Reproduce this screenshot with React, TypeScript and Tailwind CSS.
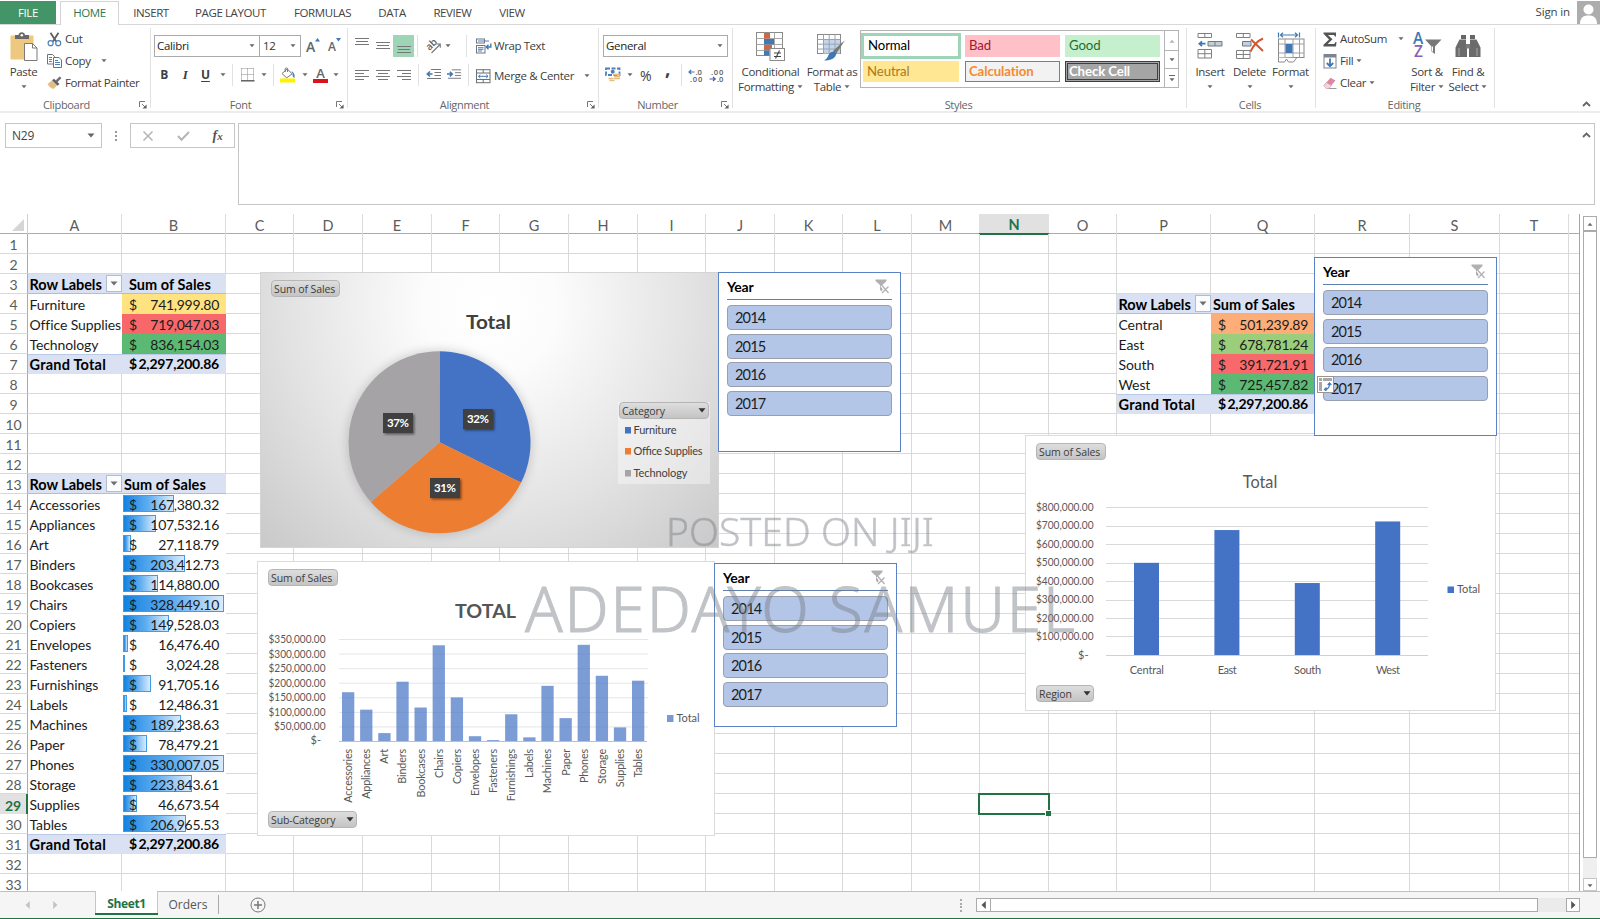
import React from "react";

/* ---------- small shared pieces ---------- */

function Caret({ className = "" }: { className?: string }) {
  return (
    <svg width="6" height="4" viewBox="0 0 6 4" className={`shrink-0 ${className}`}>
      <path d="M0.5 0.3h5L3 3.3z" fill="#6a6a6a" />
    </svg>
  );
}

function Launcher() {
  return (
    <svg width="8" height="8" viewBox="0 0 8 8" className="shrink-0">
      <path d="M0.5 6V0.5H6M3 3l3 3" stroke="#777" fill="none" />
      <path d="M7.6 3.4v4.2H3.4z" fill="#666" />
    </svg>
  );
}

function Group({ label, className, launcher, labelShift = "", children }: { label: string; className: string; launcher?: boolean; labelShift?: string; children: React.ReactNode }) {
  return (
    <section className={`flex h-[87px] shrink-0 flex-col ${className}`}>
      <div className="h-[72px] w-full">{children}</div>
      <div className={`flex h-[15px] items-center ${launcher ? "pr-[3px]" : ""}`}>
        <span className={`flex-1 text-center text-[11px] leading-[14px] text-[#666] ${labelShift}`}>{label}</span>
        {launcher && <Launcher />}
      </div>
    </section>
  );
}

function GroupLine() {
  return <div className="mt-[3px] h-[80px] w-px shrink-0 bg-[#e2e2e2]" />;
}

function Rule() {
  return <div className="h-[22px] w-px shrink-0 bg-[#e1e1e1]" />;
}

function Slot({ className, children }: { className: string; children?: React.ReactNode }) {
  return <div className={`flex shrink-0 items-center ${className}`}>{children}</div>;
}

/* ---------- ribbon icons ---------- */

const PasteIcon = () => (
  <svg width="28" height="30" viewBox="0 0 28 30">
    <rect x="0.5" y="3.5" width="23" height="24" rx="1" fill="#edc87e" />
    <path d="M5 3h3.5a3.3 3.3 0 0 1 6.5 0H19v4H5z" fill="#6b6668" />
    <circle cx="11.8" cy="3.2" r="1.3" fill="#fff" />
    <path d="M14.5 11.5h8l4.500 4.500v12.500h-12.500z" fill="#fff" stroke="#7a7a7a" />
    <path d="M22.500 11.500v4.500h4.500" fill="none" stroke="#7a7a7a" />
  </svg>
);
const CutIcon = () => (
  <svg width="15" height="15" viewBox="0 0 15 15">
    <path d="M3.500 0.800l5.600 8.700M11.500 0.800L5.900 9.500" stroke="#606060" strokeWidth="1.800" />
    <circle cx="3.600" cy="11.200" r="2.500" fill="none" stroke="#4d7fb8" strokeWidth="1.200" />
    <circle cx="11.200" cy="11.200" r="2.500" fill="none" stroke="#4d7fb8" strokeWidth="1.200" />
  </svg>
);
const CopyIcon = () => (
  <svg width="16" height="14" viewBox="0 0 16 14">
    <path d="M0.500 0.500h5l2 2v7.500h-7z" fill="#fff" stroke="#727272" />
    <path d="M2 3.500h3M2 5.500h3M2 7.500h3" stroke="#4d7fb8" />
    <path d="M6.500 3.500h5.500l2.500 2.500v7.500h-8z" fill="#fff" stroke="#727272" />
    <path d="M8 6.500h3M8 8.500h5M8 10.500h5" stroke="#4d7fb8" />
  </svg>
);
const PainterIcon = () => (
  <svg width="15" height="14" viewBox="0 0 15 14">
    <path d="M0.500 8L5 4.500l5 5L6.500 13c-1.500-.5-4.500-2-6-5z" fill="#e6bd80" />
    <path d="M5 4.300l2-1.600 5.500 5.200-2 1.800z" fill="#606060" />
    <path d="M8.300 4.800L12.600 0.400l1.900 1.700-4.300 4.500z" fill="#707070" />
  </svg>
);
const BordersIcon = () => (
  <svg width="14" height="14" viewBox="0 0 14 14">
    <path d="M0.500 0.500h12.500M0.500 6.500h12.500M0.500 0.500v12M6.500 0.500v12M12.500 0.500v12" stroke="#8a8a8a" strokeDasharray="1 1" />
    <path d="M0 12.800h13.500" stroke="#555" strokeWidth="1.400" />
  </svg>
);
const BucketIcon = () => (
  <svg width="16" height="16" viewBox="0 0 16 16">
    <path d="M2 6.500L7.200 2l5 4.800-5.500 4.100z" fill="#fff" stroke="#777" />
    <path d="M5.200 5V1.500q1.200-1.300 2.400 0V5" fill="none" stroke="#777" />
    <path d="M11.300 4.200q3.800 1 3.300 6.600q-2.400 0-2-4.600z" fill="#4d7fb8" />
    <rect x="0" y="11.500" width="15" height="4" fill="#fff200" />
  </svg>
);
const LinesIcon = ({ rows }: { rows: [number, number, number][] }) => (
  <svg width="14" height="14" viewBox="0 0 14 14">
    {rows.map(([x, y, w]) => (
      <rect key={y} x={x} y={y} width={w} height="1" fill="#777" />
    ))}
  </svg>
);
const OrientIcon = () => (
  <svg width="17" height="15" viewBox="0 0 17 15" className="overflow-visible">
    <text x="0" y="0" transform="translate(4.500 12) rotate(-45)" fontSize="10" fontFamily="Open Sans" fontWeight="600" fill="#606060">ab</text>
    <path d="M6.500 14L15 5.500M11.500 5h3.800v3.800" stroke="#777" fill="none" strokeWidth="1.100" />
  </svg>
);
const IndentIcon = ({ flip }: { flip?: boolean }) => (
  <svg width="16" height="12" viewBox="0 0 16 12">
    <path d="M5 0.500h10M8.500 3.500h6.500M8.500 6.500h6.500M1 9.500h14" stroke="#777" />
    {flip ? <path d="M0 5h5M3 2.500L5.700 5 3 7.500" stroke="#3f78b5" strokeWidth="1.600" fill="none" /> : <path d="M1.500 5h5M4 2.500L1.300 5 4 7.500" stroke="#3f78b5" strokeWidth="1.600" fill="none" />}
  </svg>
);
const WrapIcon = () => (
  <svg width="16" height="16" viewBox="0 0 16 16">
    <rect x="0.500" y="1" width="8" height="4" fill="#fff" stroke="#6f7680" />
    <path d="M2 3h11" stroke="#4d7fb8" />
    <rect x="0.500" y="7.500" width="8.500" height="7.500" fill="#fff" stroke="#6f7680" />
    <path d="M2 9.700h5.500M2 11.300h5.500M2 13h4" stroke="#4d7fb8" />
    <path d="M14.800 5.500v3.500h-4M12.500 6.700L10.300 9l2.200 2.200" stroke="#3f78b5" strokeWidth="1.400" fill="none" />
  </svg>
);
const MergeIcon = () => (
  <svg width="15" height="15" viewBox="0 0 15 15">
    <rect x="0.500" y="0.700" width="13.500" height="13" fill="#fff" stroke="#6f6f6f" />
    <path d="M0.500 4h13.500M0.500 10.500h13.500M7.200 0.700V4M7.200 10.500v3.200" stroke="#6f6f6f" />
    <path d="M2.500 7.300h9.500M4.300 5.600L2.500 7.300l1.800 1.700M10.200 5.600L12 7.300 10.200 9" stroke="#3f78b5" fill="none" />
  </svg>
);
const CurrencyIcon = () => (
  <svg width="16" height="16" viewBox="0 0 16 16">
    <rect x="1" y="1.500" width="13.500" height="6.500" fill="#fff" stroke="#4d7fb8" strokeWidth="1.800" strokeDasharray="4 1.500" />
    <circle cx="7.700" cy="4.700" r="2" fill="#4d7fb8" />
    <path d="M8 7.500h7M9 9.500h6M3.500 11.500h5M4.500 13.500h5M9 11.500h6" stroke="#e6bd80" strokeWidth="1.300" />
  </svg>
);
const DecimalIcon = ({ less }: { less?: boolean }) => (
  <svg width="15" height="15" viewBox="0 0 15 15" fontFamily="Open Sans" fontSize="7.600" fontWeight="600" fill="#606060" className="overflow-visible">
    {less ? (
      <>
        <text x="2" y="6.500" textLength="12">.00</text>
        <text x="8" y="13.500" textLength="6">.0</text>
        <path d="M0.500 11h5.500M4 9l2.200 2L4 13" stroke="#4a5fa8" fill="none" strokeWidth="1.200" />
      </>
    ) : (
      <>
        <text x="7.500" y="6.500" textLength="6">.0</text>
        <text x="2" y="13.500" textLength="12">.00</text>
        <path d="M1 4h5.500M3.200 2L1 4l2.200 2" stroke="#3f78b5" fill="none" strokeWidth="1.200" />
      </>
    )}
  </svg>
);
const CondIcon = () => (
  <svg width="30" height="30" viewBox="0 0 30 30">
    <rect x="0.500" y="0.500" width="26" height="23" fill="#fff" stroke="#8a8a8a" />
    <path d="M0.500 6.500h26M0.500 12.500h26M0.500 18.500h26M8.500 0.500v23M13.500 0.500v23M18.500 0.500v23" stroke="#a8a8a8" />
    <rect x="8" y="1" width="6" height="5.500" fill="#d2663e" />
    <rect x="8" y="7" width="10" height="5.500" fill="#4379b0" />
    <rect x="8" y="13" width="8" height="5" fill="#d2663e" />
    <rect x="8" y="18.500" width="5" height="5" fill="#4379b0" />
    <rect x="14" y="16.500" width="14.500" height="12" fill="#fff" stroke="#8a8a8a" />
    <path d="M18 21h7M18 24.500h7M23.500 18.500l-4 8" stroke="#444" strokeWidth="1.100" />
  </svg>
);
const TableIcon = () => (
  <svg width="30" height="30" viewBox="0 0 30 30">
    <rect x="0.500" y="2.500" width="23" height="19" fill="#fff" stroke="#8a8a8a" />
    <rect x="6" y="7.500" width="17" height="14" fill="#c2d5ea" />
    <path d="M0.500 7.500h23M0.500 12.200h23M0.500 17h23M6.500 2.500v19M12.200 2.500v19M18 2.500v19" stroke="#9aa4b0" />
    <path d="M27.800 8.500l-8.500 13-3.500-2.300L24.500 11z" fill="#787878" />
    <path d="M19.500 21.500c-1 4.500-5 7-12.500 7 3-1.500 3.500-3.500 4.500-5.500 1.500-3 6-4.500 8-1.500z" fill="#3f78b5" />
  </svg>
);
const InsertIcon = () => (
  <svg width="26" height="28" viewBox="0 0 26 28">
    <path d="M1 1.500h13.500v4H1zM7.800 1.500v4M1 17.500h13.500v8.500H1zM7.800 17.500v8.500M1 21.700h13.500" stroke="#808080" fill="#fff" />
    <path d="M11 9.500h14v4.500H11zM18 9.500V14" stroke="#707a85" fill="#c6ccd4" />
    <path d="M2 11.700h6.500M5 9.300l-2.700 2.400L5 14.200" stroke="#3f78b5" fill="none" strokeWidth="1.700" />
  </svg>
);
const DeleteIcon = () => (
  <svg width="28" height="28" viewBox="0 0 28 28">
    <path d="M0.500 1.500H14v4H0.500zM7.300 1.500v4M0.500 18.500H14v8H0.500zM7.300 18.500v8M0.500 22.500H14" stroke="#808080" fill="#fff" />
    <path d="M6.500 9.500H15v4.500H6.500z" stroke="#707a85" fill="#c2d0e0" />
    <path d="M15 7.500l12 11.500M27 6.500Q19 10 14.500 19.500" stroke="#d2562f" fill="none" strokeWidth="2" />
  </svg>
);
const FormatIcon = () => (
  <svg width="28" height="31" viewBox="0 0 28 31">
    <path d="M1.500 0.500v5M22.500 0.500v5M3 3h18M6 0.800L3.500 3 6 5.200M18 0.800L20.500 3 18 5.200" stroke="#3f78b5" fill="none" strokeWidth="1.200" />
    <rect x="1.500" y="7" width="25.500" height="18.500" fill="#fff" stroke="#8a8a8a" />
    <path d="M1.500 12h25.500M1.500 21h25.500M8 7v18.500M16 7v18.500M22.500 7v18.500" stroke="#a0a0a0" />
    <rect x="8.500" y="12" width="7" height="9" fill="#3f78b5" />
    <path d="M1.500 25.500v4.500h6l2-3 2 3h5l3-4" stroke="#8a8a8a" fill="#fff" />
  </svg>
);
const SigmaIcon = () => (
  <svg width="14" height="15" viewBox="0 0 14 15">
    <path d="M0.500 0.500h12.500V4.500h-1L11 2.900H5L9.500 7.200 4.700 12H11.300l1.200-1.900h1L13 14.500H0.500v-1.700L6 7.400 0.500 1.800z" fill="#555" />
  </svg>
);
const FillIcon = () => (
  <svg width="14" height="15" viewBox="0 0 14 15">
    <rect x="1" y="0.500" width="12" height="13.500" fill="#fff" stroke="#7a8590" />
    <rect x="1" y="0.500" width="12" height="3" fill="#7a8590" />
    <path d="M7 4.500v7.500M3.800 9L7 12.200 10.200 9" stroke="#3f78b5" fill="none" strokeWidth="1.800" />
  </svg>
);
const EraserIcon = () => (
  <svg width="14" height="13" viewBox="0 0 14 13">
    <path d="M0.800 8.500L7.500 0.800 12.500 3.500 6 11z" fill="#dd87a0" />
    <path d="M0.800 8.500l2.700-3 5 3L6 11.500H3z" fill="#f4d4dd" stroke="#c999a8" strokeWidth=".6" />
    <path d="M6 11.500h7.500" stroke="#9a9a9a" />
  </svg>
);
const SortIcon = () => (
  <svg width="29" height="27" viewBox="0 0 29 27" fontFamily="Open Sans" fontWeight="600" fontSize="15.500" className="overflow-visible">
    <text x="0" y="11.800" fill="#3f78b5">A</text>
    <text x="1" y="25.300" fill="#8560b8">Z</text>
    <path d="M12 7.500h16.500L22 14.500v7.500l-3.500-2.500v-5z" fill="#787878" />
    <path d="M19.500 14.500v5" stroke="#fff" />
  </svg>
);
const FindIcon = () => (
  <svg width="26" height="24" viewBox="0 0 26 24">
    <path d="M6 1h5v4h-5zM15 1h5v4h-5z" fill="#666" />
    <path d="M4.500 5.500H11V10l1 2v11H0.500V13.500zM15 5.500h6.500l4 8V23H14V12l1-2z" fill="#6b6b6b" />
    <path d="M11 10h4v4.500h-4z" fill="#7d7d7d" />
    <path d="M4 14v8M22 14v8" stroke="#aaa" />
  </svg>
);

function BigButton({ icon, lines, className, bottomCaret }: { icon: React.ReactNode; lines: string[]; className: string; bottomCaret?: boolean }) {
  return (
    <div className={`flex shrink-0 flex-col items-center ${className}`}>
      <div className="flex h-[32px] items-start">{icon}</div>
      <span className="h-[15px] text-[11.5px] leading-[15px] whitespace-nowrap">{lines[0]}</span>
      {lines[1] && (
        <span className="flex h-[15px] items-center gap-[3px] text-[11.5px] leading-[15px] whitespace-nowrap">
          {lines[1]}
          <Caret />
        </span>
      )}
      {bottomCaret && <Caret className="mt-[6px]" />}
    </div>
  );
}

function Ribbon() {
  return (
    <div className="flex h-[88px] border-b-2 border-[#ececec] bg-white text-[11.5px] tracking-[-0.32px] text-[#404040]">
      <Group label="Clipboard" className="w-[150px]" launcher labelShift="pl-[2px] pr-[8px]">
        <div className="flex pt-[7px]">
          <BigButton className="ml-[6px] w-[35px]" icon={<PasteIcon />} lines={["Paste"]} bottomCaret />
          <div className="-mt-px ml-[6px] flex flex-col">
            <Slot className="h-[16px] gap-[2px]"><Slot className="w-[16px]"><CutIcon /></Slot>Cut</Slot>
            <Slot className="mt-[6px] h-[16px] gap-[2px]"><Slot className="w-[16px]"><CopyIcon /></Slot>Copy<Caret className="ml-[8px]" /></Slot>
            <Slot className="mt-[6px] h-[16px] gap-[2px]"><Slot className="w-[16px]"><PainterIcon /></Slot><span className="tracking-[-0.42px]">Format Painter</span></Slot>
          </div>
        </div>
      </Group>
      <GroupLine />
      <Group label="Font" className="w-[196px]" launcher labelShift="pr-[6px]">
        <div className="flex h-[32px] items-end pl-[3px]">
          <div className="flex h-[22px] w-[106px] items-center justify-between border border-[#ababab] pr-[4px] pl-[2px] text-[#222]">Calibri<Caret /></div>
          <div className="-ml-px flex h-[22px] w-[42px] items-center justify-between border border-[#ababab] pr-[4px] pl-[3px] text-[#333]">12<Caret /></div>
          <div className="ml-[5px] flex h-[22px] items-center text-[14px] font-semibold text-[#666]">A<svg width="5" height="4" viewBox="0 0 5 4" className="-mt-[12px]"><path d="M0 3.500h5L2.500 0z" fill="#3f78b5" /></svg></div>
          <div className="ml-[8px] flex h-[22px] items-center pt-[2px] text-[12px] font-semibold text-[#666]">A<svg width="5" height="4" viewBox="0 0 5 4" className="-mt-[14px]"><path d="M0 0h5L2.500 3.500z" fill="#3f78b5" /></svg></div>
        </div>
        <div className="mt-[7px] flex h-[22px] items-center">
          <Slot className="w-[24px] justify-center pl-[2px] text-[12px] font-bold">B</Slot>
          <Slot className="w-[20px] justify-center font-['Liberation_Serif'] text-[13px] font-bold italic">I</Slot>
          <Slot className="w-[21px] justify-center text-[12px] font-bold underline underline-offset-2">U</Slot>
          <Slot className="w-[16px] pl-[4px]"><Caret /></Slot>
          <Rule />
          <Slot className="w-[24px] pl-[8px]"><BordersIcon /></Slot>
          <Slot className="w-[16px] pl-[4px]"><Caret /></Slot>
          <Rule />
          <Slot className="w-[22px] pl-[6px]"><BucketIcon /></Slot>
          <Slot className="w-[17px] pl-[6px]"><Caret /></Slot>
          <div className="flex w-[15px] flex-col items-center">
            <span className="h-[12px] text-[13px] leading-[13px] font-semibold text-[#666]">A</span>
            <span className="h-[4px] w-[15px] bg-[#d8141c]" />
          </div>
          <Slot className="pl-[5px]"><Caret /></Slot>
        </div>
      </Group>
      <GroupLine />
      <Group label="Alignment" className="w-[250px]" launcher labelShift="pr-[6px]">
        <div className="flex">
          <div className="flex w-[121px] shrink-0 flex-col">
            <div className="flex h-[32px] items-end">
              <Slot className="h-[22px] w-[21px] pb-[4px] pl-[7px]"><LinesIcon rows={[[0, 1, 14], [1, 4, 12], [0, 7, 14]]} /></Slot>
              <Slot className="h-[22px] w-[24px] pb-[1px] pl-[7px]"><LinesIcon rows={[[0, 3, 14], [1, 6, 12], [0, 9, 14]]} /></Slot>
              <Slot className="h-[22px] w-[21px] justify-center bg-[#9ed5b7]"><LinesIcon rows={[[0, 7, 14], [1, 10, 12], [0, 13, 14]]} /></Slot>
              <Slot className="h-[22px] w-[4px] justify-end"><Rule /></Slot>
              <Slot className="h-[22px] w-[25px] pl-[7px]"><OrientIcon /></Slot>
              <Slot className="h-[22px] pl-[2px]"><Caret /></Slot>
              <Slot className="ml-[15px] h-[22px]"><Rule /></Slot>
            </div>
            <div className="mt-[7px] flex h-[22px] items-center">
              <Slot className="w-[21px] pl-[7px]"><LinesIcon rows={[[0, 2, 14], [0, 5, 9], [0, 8, 14], [0, 11, 9]]} /></Slot>
              <Slot className="w-[21px] pl-[7px]"><LinesIcon rows={[[0, 2, 14], [2, 5, 10], [0, 8, 14], [2, 11, 10]]} /></Slot>
              <Slot className="w-[28px] pl-[7px]"><LinesIcon rows={[[0, 2, 14], [5, 5, 9], [0, 8, 14], [5, 11, 9]]} /></Slot>
              <Rule />
              <Slot className="w-[28px] pl-[7px]"><IndentIcon /></Slot>
              <IndentIcon flip />
              <Slot className="ml-[6px]"><Rule /></Slot>
            </div>
          </div>
          <div className="flex flex-col pl-[7px]">
            <Slot className="mt-[10px] h-[22px] gap-[2px] tracking-[-0.42px]"><WrapIcon />Wrap Text</Slot>
            <Slot className="mt-[8px] h-[22px] gap-[2px]"><Slot className="w-[16px]"><MergeIcon /></Slot>Merge &amp; Center<Caret className="ml-[8px]" /></Slot>
          </div>
        </div>
      </Group>
      <GroupLine />
      <Group label="Number" className="w-[133px]" launcher labelShift="pr-[5px]">
        <div className="flex h-[32px] items-end pl-[4px]">
          <div className="flex h-[22px] w-[125px] items-center justify-between border border-[#ababab] pr-[4px] pl-[2px] text-[#222]">General<Caret /></div>
        </div>
        <div className="mt-[7px] flex h-[22px] items-center">
          <Slot className="w-[28px] pl-[6px]"><CurrencyIcon /></Slot>
          <Slot className="w-[13px]"><Caret /></Slot>
          <Slot className="w-[16px] text-[14px]">%</Slot>
          <Slot className="w-[25px] pb-[14px] pl-[9px] text-[19px] leading-[16px] font-bold">,</Slot>
          <Rule />
          <Slot className="w-[21px] pl-[6px]"><DecimalIcon /></Slot>
          <Slot className="pl-[6px]"><DecimalIcon less /></Slot>
        </div>
      </Group>
      <GroupLine />
      <Group label="Styles" className="w-[453px]" labelShift="pr-[2px]">
        <div className="flex h-[72px]">
          <BigButton className="mt-[7px] w-[75px]" icon={<CondIcon />} lines={["Conditional", "Formatting"]} />
          <BigButton className="mt-[7px] w-[48px]" icon={<TableIcon />} lines={["Format as", "Table"]} />
          <div className="mt-[5px] ml-[4px] flex h-[58px] w-[319px] border border-[#b4b4b4] pt-[2px] pl-px font-['Lato'] text-[13.200px] tracking-[-0.1px]">
            <div className="grid flex-1 grid-cols-[98px_95px_95px] grid-rows-[26px_22px] gap-x-[5px]">
              <div className="-ml-px flex w-[100px] items-center border-[3px] border-[#9ed5b7] bg-white pl-[4px] text-black">Normal</div>
              <div className="my-[2px] flex items-center bg-[#ffc0c8] pl-[4px] text-[#a8142c]">Bad</div>
              <div className="my-[2px] flex items-center bg-[#c6efce] pl-[4px] text-[#1d7030]">Good</div>
              <div className="mt-[2px] ml-px flex h-[21px] w-[96px] items-center bg-[#ffe794] pt-px pl-[4px] text-[#a87a20]">Neutral</div>
              <div className="mt-[2px] flex h-[21px] items-center border border-[#7f7f7f] bg-[#f2f2f2] pt-px pl-[3px] font-bold text-[#f58a2e]">Calculation</div>
              <div className="mt-[2px] flex h-[21px] items-center border-[3px] border-double border-[#3f3f3f] bg-[#a5a5a5] pt-px pl-[1px] font-bold text-white">Check Cell</div>
            </div>
            <div className="-mt-[2px] flex w-[14px] flex-col border-l border-[#b4b4b4]">
              <div className="flex h-[20px] items-center justify-center border-b border-[#b4b4b4]"><Caret className="rotate-180 opacity-50" /></div>
              <div className="flex h-[18px] items-center justify-center border-b border-[#b4b4b4]"><Caret /></div>
              <div className="flex flex-1 flex-col items-center justify-center gap-[2px]"><span className="h-px w-[6px] bg-[#666]" /><Caret /></div>
            </div>
          </div>
        </div>
      </Group>
      <GroupLine />
      <Group label="Cells" className="w-[128px]" labelShift="pr-[2px]">
        <div className="flex pt-[7px]">
          <BigButton className="ml-[4px] w-[38px]" icon={<InsertIcon />} lines={["Insert"]} bottomCaret />
          <BigButton className="w-[41px]" icon={<DeleteIcon />} lines={["Delete"]} bottomCaret />
          <BigButton className="w-[41px]" icon={<FormatIcon />} lines={["Format"]} bottomCaret />
        </div>
      </Group>
      <GroupLine />
      <Group label="Editing" className="w-[178px]" labelShift="pr-[2px]">
        <div className="flex pt-[7px]">
          <div className="-mt-px ml-[7px] flex w-[84px] flex-col">
            <Slot className="h-[16px] gap-[3px]"><SigmaIcon />AutoSum<Caret className="ml-[8px]" /></Slot>
            <Slot className="mt-[6px] h-[16px] gap-[3px]"><FillIcon />Fill<Caret /></Slot>
            <Slot className="mt-[6px] h-[16px] gap-[3px]"><EraserIcon />Clear<Caret /></Slot>
          </div>
          <BigButton className="w-[40px]" icon={<SortIcon />} lines={["Sort &", "Filter"]} />
          <BigButton className="w-[42px]" icon={<div className="pt-[2px]"><FindIcon /></div>} lines={["Find &", "Select"]} />
        </div>
      </Group>
      <GroupLine />
      <div className="flex flex-1 items-end justify-end pr-[9px] pb-[4px]"><UpChevron /></div>
    </div>
  );
}

function UpChevron() {
  return (
    <svg width="9" height="6" viewBox="0 0 9 6">
      <path d="M1 5l3.500-3.500L8 5" stroke="#666" strokeWidth="1.800" fill="none" />
    </svg>
  );
}

/* ---------- tab strip and formula bar ---------- */

const TABS: [string, string][] = [
  ["INSERT", "w-[64px]"],
  ["PAGE LAYOUT", "w-[95px]"],
  ["FORMULAS", "w-[89px]"],
  ["DATA", "w-[50px]"],
  ["REVIEW", "w-[71px]"],
  ["VIEW", "w-[48px]"],
];

function TabStrip() {
  return (
    <header className="flex h-[25px] border-b border-[#d8d8d8] bg-white pt-px text-[11.5px] tracking-[-0.4px] text-[#444]">
      <div className="flex w-[56px] items-center justify-center bg-[#439467] text-white">FILE</div>
      <div className="-mb-px ml-[4px] flex w-[59px] items-center justify-center border border-b-0 border-[#d4d4d4] bg-white pb-px text-[#2b7a50]">HOME</div>
      {TABS.map(([t, w]) => (
        <div key={t} className={`flex items-center justify-center ${w}`}>{t}</div>
      ))}
      <div className="flex-1" />
      <div className="flex items-center pr-[7px] pb-px tracking-[-0.15px]">Sign in</div>
      <svg width="23" height="23" viewBox="0 0 23 23">
        <rect width="23" height="23" fill="#adadad" />
        <circle cx="11.500" cy="8.500" r="5" fill="#fff" />
        <path d="M3 23c0-6 3-8.500 8.500-8.500S20 17 20 23z" fill="#fff" />
      </svg>
    </header>
  );
}

function FormulaBar() {
  return (
    <div className="flex h-[101px] bg-white pt-[10px] pl-[5px]">
      <div className="flex h-[25px] w-[97px] items-center justify-between border border-[#c6c6c6] pr-[6px] pl-[6px] text-[12px] tracking-[-0.2px] text-[#444]">
        N29
        <svg width="8" height="5" viewBox="0 0 8 5"><path d="M0.500 0.500h7L4 4.500z" fill="#666" /></svg>
      </div>
      <div className="flex h-[25px] w-[28px] flex-col items-center justify-center gap-[2px]">
        <span className="h-[2px] w-[2px] bg-[#999]" /><span className="h-[2px] w-[2px] bg-[#999]" /><span className="h-[2px] w-[2px] bg-[#999]" />
      </div>
      <div className="flex h-[25px] w-[105px] items-center justify-around border border-[#c6c6c6]">
        <svg width="12" height="10" viewBox="0 0 12 10"><path d="M1.500 0.500l9 9M10.500 0.500l-9 9" stroke="#b5b5b5" strokeWidth="1.500" /></svg>
        <svg width="13" height="10" viewBox="0 0 13 10"><path d="M1 5l3.500 3.800L12 1" stroke="#b5b5b5" strokeWidth="2" fill="none" /></svg>
        <span className="font-['Liberation_Serif'] text-[14px] leading-none font-bold text-[#555] italic">f<span className="text-[11px]">x</span></span>
      </div>
      <div className="ml-[3px] flex h-[82px] w-[1357px] items-start justify-end border border-[#c6c6c6] pt-[8px] pr-[3px]"><UpChevron /></div>
    </div>
  );
}

/* ---------- worksheet data ---------- */

type Cell = { text?: string; amount?: string; bold?: boolean; bg?: string; bar?: number; filter?: boolean; pad?: string; rule?: "t" | "b"; spacing?: string };

const cells: Record<string, Cell> = {};
const HEAD = "bg-[#d9e1f2]";

function putPivot(labelCol: string, valueCol: string, top: number, pad: string, items: [string, number, string][], bars: boolean) {
  cells[labelCol + top] = { text: "Row Labels", bold: true, bg: HEAD, filter: true, rule: "b", spacing: "tracking-[-0.05px]" };
  cells[valueCol + top] = { text: "Sum of Sales", bold: true, bg: HEAD, pad, rule: "b", spacing: "tracking-[0.05px]" };
  items.forEach(([name, value, bg], i) => {
    const r = top + 1 + i;
    cells[labelCol + r] = { text: name, bg: "bg-white" };
    cells[valueCol + r] = { amount: value.toLocaleString("en-US", { minimumFractionDigits: 2 }), bg, bar: bars ? value : undefined };
  });
  const last = top + items.length + 1;
  cells[labelCol + last] = { text: "Grand Total", bold: true, bg: HEAD, rule: "t", spacing: "tracking-[0.22px]" };
  cells[valueCol + last] = { amount: "2,297,200.86", bold: true, bg: HEAD, rule: "t" };
}

const SUBS: [string, number][] = [
  ["Accessories", 167380.32], ["Appliances", 107532.16], ["Art", 27118.79], ["Binders", 203412.73], ["Bookcases", 114880.0],
  ["Chairs", 328449.1], ["Copiers", 149528.03], ["Envelopes", 16476.4], ["Fasteners", 3024.28], ["Furnishings", 91705.16],
  ["Labels", 12486.31], ["Machines", 189238.63], ["Paper", 78479.21], ["Phones", 330007.05], ["Storage", 223843.61],
  ["Supplies", 46673.54], ["Tables", 206965.53],
];
const REGIONS: [string, number][] = [["Central", 501239.89], ["East", 678781.24], ["South", 391721.91], ["West", 725457.82]];

putPivot("A", "B", 3, "pl-[7px]", [["Furniture", 741999.8, "bg-[#ffe380]"], ["Office Supplies", 719047.03, "bg-[#f8686a]"], ["Technology", 836154.03, "bg-[#5cb973]"]], false);
putPivot("A", "B", 13, "pl-[2px]", SUBS.map(([n, v]) => [n, v, "bg-white"]), true);
const REGION_FILLS = ["bg-[#fcad78]", "bg-[#9bce7b]", "bg-[#f8696b]", "bg-[#5cb973]"];
putPivot("P", "Q", 4, "pl-[2px]", REGIONS.map(([n, v], i) => [n, v, REGION_FILLS[i]]), false);

const COLS = "ABCDEFGHIJKLMNOPQRST".split("");
const GRID = "grid grid-cols-[28px_94px_104px_68px_69px_69px_68px_69px_69px_68px_69px_68px_69px_68px_69px_68px_94px_104px_95px_90px_69px_12px]";

function FilterButton() {
  return (
    <span className="flex h-[17px] w-[16px] shrink-0 items-center justify-center border border-[#b3bccb] bg-[#fbfcfe]">
      <svg width="8" height="5" viewBox="0 0 8 5"><path d="M0.500 0.500h7L4 4.500z" fill="#6f6f6f" /></svg>
    </span>
  );
}

function GridCell({ col, row }: { col: string; row: number }) {
  const c = cells[col + row];
  if (!c) return <div className="border-r border-b border-[#d9d9d9]" />;
  const rule = c.rule === "b" ? "border-b border-[#a9bfe3]" : c.rule === "t" ? "border-t border-[#b9c9e8]" : "";
  if (c.amount) {
    return (
      <div className={`relative flex items-center justify-between pr-[7px] pl-[7px] ${c.bg} ${rule} ${c.bold ? "pb-[2px] font-bold tracking-[-0.2px] text-black" : "pt-px tracking-[-0.28px]"}`}>
        {c.bar !== undefined && (
          <span className="absolute top-[1px] left-[1px] h-[17px] border border-[#3f9de8] bg-linear-to-r from-[#0a82e0] via-[#5eaef0] to-[#d9ebfc]" style={{ width: Math.max(1, (c.bar / 330007.05) * 101) }} />
        )}
        <span className="relative">$</span>
        <span className="relative">{c.amount}</span>
      </div>
    );
  }
  const nudge = c.rule === "b" ? "pt-[2px]" : c.rule === "t" ? "pb-[1px]" : "pt-[1px]";
  return (
    <div className={`flex items-center overflow-hidden whitespace-nowrap ${c.pad ?? "pl-[1.5px]"} ${c.bg} ${rule} ${c.bold ? `text-[14.500px] font-bold text-black ${c.spacing}` : "tracking-[-0.1px]"}`}>
      <span className={`flex-1 leading-[17px] ${nudge}`}>{c.text}</span>
      {c.filter && <FilterButton />}
    </div>
  );
}

function Sheet() {
  const rows = Array.from({ length: 33 }, (_, i) => i + 1);
  return (
    <div className="h-[678px] w-[1580px] shrink-0 overflow-hidden border-r border-[#a6a6a6] bg-white font-['Lato'] text-[14px] leading-[17px] text-[#1c1c1c]">
      <div className={`${GRID} h-[20px] border-b border-[#ababab] text-[14.500px] leading-[17px] text-[#5c5c5c]`}>
        <div className="flex items-end justify-end border-r border-[#d0d0d0] pr-[3px] pb-[3px]">
          <svg width="12" height="12" viewBox="0 0 12 12"><path d="M12 0v12H0z" fill="#d6d6d6" /></svg>
        </div>
        {COLS.map((c) => (
          <div key={c} className={c === "N" ? "-mb-px -ml-px flex items-center justify-center border-b-2 border-[#217346] bg-[#e1e1e1] pt-[2px] font-bold text-[#217346]" : "flex items-center justify-center border-r border-[#dcdcdc] pt-[2px]"}>{c}</div>
        ))}
        <div />
      </div>
      {rows.map((r) => (
        <div key={r} className={`${GRID} h-[20px]`}>
          <div className={r === 29 ? "flex items-center justify-center border-r-2 border-[#217346] bg-[#e1e1e1] pt-[2px] font-bold text-[#217346]" : "flex items-center justify-center border-r border-b border-r-[#ababab] border-b-[#d9d9d9] pt-[2px] text-[#5c5c5c]"}>{r}</div>
          {COLS.map((c) => <GridCell key={c} col={c} row={r} />)}
          <div className="border-b border-[#d9d9d9]" />
        </div>
      ))}
    </div>
  );
}

/* ---------- floating objects ---------- */

function FieldButton({ label, caret, className }: { label: string; caret?: boolean; className: string }) {
  return (
    <div className={`absolute flex h-[17px] items-center justify-between rounded-[4px] border border-[#b5b5b5] bg-linear-to-b from-[#dedede] to-[#c4c4c4] px-[2px] text-[10.500px] leading-[14px] tracking-[-0.1px] whitespace-nowrap text-[#3c3c3c] ${className}`}>
      {label}
      {caret && <svg width="8" height="5" viewBox="0 0 8 5"><path d="M0.500 0.300h7L4 4.600z" fill="#333" /></svg>}
    </div>
  );
}

function Slicer({ className }: { className: string }) {
  return (
    <div className={`absolute flex flex-col border border-[#5b82c4] bg-white px-[8px] font-['Lato'] ${className}`}>
      <div className="flex h-[27px] shrink-0 items-center justify-between border-b border-[#5f80ad] pr-[2px]">
        <span className="text-[14px] font-bold tracking-[-0.2px] text-black">Year</span>
        <svg width="15" height="15" viewBox="0 0 15 15">
          <path d="M0.500 0.500h11v1.500L7.500 6v7L5 11V6L0.500 2z" fill="#b0b0b0" />
          <path d="M6.500 6.500l7 7.500M13.500 7.500l-6.500 6.500" stroke="#fff" strokeWidth="3" />
          <path d="M6.500 6l7 8M13.500 7.500l-6.500 6.500" stroke="#b3b3b3" strokeWidth="1.400" />
        </svg>
      </div>
      <div className="mt-[5px] flex flex-col gap-[3.600px]">
        {["2014", "2015", "2016", "2017"].map((y) => (
          <div key={y} className="flex h-[25px] items-center rounded-[4px] border border-[#9a9fb0] bg-[#b4c6e7] pt-px pl-[7px] text-[14.500px] tracking-[-0.8px] text-[#1c1c24]">{y}</div>
        ))}
      </div>
    </div>
  );
}

function arc(from: number, to: number) {
  const p = (f: number) => [178.5 + 91 * Math.sin(f * 2 * Math.PI), 169.3 - 91 * Math.cos(f * 2 * Math.PI)];
  const [x1, y1] = p(from);
  const [x2, y2] = p(to);
  return `M178.5 169.3L${x1} ${y1}A91 91 0 0 1 ${x2} ${y2}Z`;
}

function PieChart() {
  const tags: [number, number, string][] = [[123, 141, "37%"], [203, 137, "32%"], [170, 206, "31%"]];
  const keys: [number, string, string, number][] = [[157.5, "#4472c4", "Furniture", 43], [178.5, "#ed7d31", "Office Supplies", 69], [200.5, "#a5a5a5", "Technology", 54]];
  return (
    <div className="absolute top-[272px] left-[260px] h-[276px] w-[459px] border border-[#d4d4d4] bg-[radial-gradient(ellipse_72%_125%_at_50%_12%,#ffffff_0%,#fcfcfc_20%,#e2e2e2_62%,#c8c8c8_100%)]">
      <svg width="457" height="274" viewBox="0 0 457 274" className="block font-['Lato']">
        <defs>
          <filter id="glow" x="-20%" y="-20%" width="140%" height="140%"><feGaussianBlur stdDeviation="5" /></filter>
          <filter id="drop" x="-20%" y="-20%" width="150%" height="160%"><feDropShadow dx="1.500" dy="1.500" stdDeviation="1" floodOpacity="0.45" /></filter>
        </defs>
        <circle cx="178.500" cy="169.300" r="93" fill="#000" opacity="0.14" filter="url(#glow)" />
        <path d={arc(0, 0.323)} fill="#4472c4" />
        <path d={arc(0.323, 0.636)} fill="#ed7d31" />
        <path d={arc(0.636, 1)} fill="#a5a3a5" />
        <text x="227.500" y="56" textAnchor="middle" fontSize="19" fontWeight="700" fill="#404040" textLength="45" lengthAdjust="spacingAndGlyphs">Total</text>
        {tags.map(([x, y, t]) => (
          <g key={t}>
            <rect x={x - 1} y={y - 1} width="30" height="20" fill="#404040" filter="url(#drop)" />
            <text x={x + 14} y={y + 13} textAnchor="middle" fontSize="11.500" fontWeight="700" fill="#fff" textLength="22">{t}</text>
          </g>
        ))}
        <rect x="357" y="129" width="92" height="82" fill="#fff" opacity="0.38" />
        {keys.map(([y, c, t, w]) => (
          <g key={t}>
            <rect x="364" y={y - 3.5} width="6" height="6.500" fill={c} />
            <text x="372.500" y={y + 3.3} fontSize="11" fill="#404040" textLength={w}>{t}</text>
          </g>
        ))}
      </svg>
      <FieldButton label="Sum of Sales" className="top-[7px] left-[10px] w-[69px]" />
      <FieldButton label="Category" caret className="top-[129px] left-[358px] w-[90px]" />
    </div>
  );
}

function SubCategoryChart() {
  const ticks = ["$350,000.00", "$300,000.00", "$250,000.00", "$200,000.00", "$150,000.00", "$100,000.00", "$50,000.00"];
  return (
    <div className="absolute top-[561px] left-[257px] h-[275px] w-[458px] border border-[#dcdcdc] bg-white">
      <svg width="456" height="273" viewBox="258 562 456 273" className="block font-['Lato']" fill="#595959">
        <text x="485.500" y="617.500" textAnchor="middle" fontSize="19" fontWeight="700" textLength="61" lengthAdjust="spacingAndGlyphs" fill="#555">TOTAL</text>
        {ticks.map((t, i) => (
          <g key={t}>
            <rect x="339" y={639 + i * 14.57} width="309" height="1" fill="#e6e6e6" />
            <text x="325.500" y={643 + i * 14.5} textAnchor="end" fontSize="11" textLength={i === 6 ? 51.5 : 57} lengthAdjust="spacingAndGlyphs">{t}</text>
          </g>
        ))}
        <text x="321" y="744" textAnchor="end" fontSize="11">$-</text>
        {SUBS.map(([n, v], i) => {
          const h = (v / 350000) * 102;
          const x = 342 + i * 18.125;
          return (
            <g key={n}>
              <rect x={x} y={741 - h} width="12.300" height={h} fill="#4472c4" opacity="0.7" />
              <text transform={`translate(${x + 10} 749) rotate(-90)`} textAnchor="end" fontSize="10.800" letterSpacing="-0.15">{n}</text>
            </g>
          );
        })}
        <rect x="339" y="741" width="308" height="1" fill="#bfbfbf" />
        <rect x="667" y="715" width="6.500" height="7" fill="#7c9ad2" />
        <text x="676.500" y="722" fontSize="11" textLength="23">Total</text>
      </svg>
      <FieldButton label="Sum of Sales" className="top-[7px] left-[10px] w-[70px]" />
      <FieldButton label="Sub-Category" caret className="top-[249px] left-[10px] w-[89px]" />
    </div>
  );
}

function RegionChart() {
  const ticks = [8, 7, 6, 5, 4, 3, 2, 1];
  const widths = [34, 19, 27, 24];
  return (
    <div className="absolute top-[435px] left-[1025px] h-[276px] w-[471px] border border-[#dcdcdc] bg-white">
      <svg width="469" height="274" viewBox="1026 436 469 274" className="block font-['Lato']" fill="#595959">
        <text x="1260" y="487.500" textAnchor="middle" fontSize="16.500" textLength="34.500" lengthAdjust="spacingAndGlyphs">Total</text>
        {ticks.map((t, i) => (
          <g key={t}>
            <rect x="1106" y={Math.round(507.3 + i * 18.45)} width="322" height="1" fill="#d9d9d9" />
            <text x="1093.500" y={510.8 + i * 18.45} textAnchor="end" fontSize="11" textLength="57.500" lengthAdjust="spacingAndGlyphs">{`$${t}00,000.00`}</text>
          </g>
        ))}
        <text x="1088.500" y="658.500" textAnchor="end" fontSize="11">$-</text>
        {REGIONS.map(([n, v], i) => {
          const h = (v / 800000) * 147.6;
          const x = 1134 + i * 80.4;
          return (
            <g key={n}>
              <rect x={x} y={655.3 - h} width="25" height={h} fill="#4472c4" />
              <text x={x + 12.8} y="673.500" textAnchor="middle" fontSize="11" textLength={widths[i]}>{n}</text>
            </g>
          );
        })}
        <rect x="1106" y="655" width="322" height="1" fill="#d0d0d0" />
        <rect x="1447.500" y="586.500" width="6.500" height="6.500" fill="#4472c4" />
        <text x="1457" y="592.700" fontSize="11" textLength="23">Total</text>
      </svg>
      <FieldButton label="Sum of Sales" className="top-[7px] left-[10px] w-[70px]" />
      <FieldButton label="Region" caret className="top-[249px] left-[10px] w-[58px]" />
    </div>
  );
}

function Scrollbars() {
  return (
    <div className="flex w-[20px] flex-col items-center bg-white pt-[2px]">
      <div className="flex h-[15px] w-[14px] shrink-0 items-center justify-center border border-[#ababab] bg-white"><Caret className="rotate-180" /></div>
      <div className="h-[627px] w-[14px] shrink-0 border border-[#ababab] bg-white" />
      <div className="w-[14px] flex-1 bg-[#efefef]" />
      <div className="flex h-[13px] w-[14px] shrink-0 items-center justify-center border border-[#c6c6c6] bg-white pt-[2px]"><Caret /></div>
    </div>
  );
}

function Arrow({ left, color }: { left?: boolean; color: string }) {
  return (
    <svg width="5" height="8" viewBox="0 0 5 8"><path d={left ? "M4.800 0v8L0.500 4z" : "M0.200 0v8L4.500 4z"} fill={color} /></svg>
  );
}

function SheetTabs() {
  return (
    <footer className="flex h-[27px] items-start border-t border-[#c0c0c0] bg-[#f5f5f5] text-[12px] text-[#555]">
      <div className="flex h-[25px] w-[95px] items-center pl-[25px]"><Arrow left color="#c4c4c4" /><span className="w-[23px]" /><Arrow color="#c4c4c4" /></div>
      <div className="-mt-px flex h-[24px] w-[63px] items-center justify-center border-b-2 border-[#217346] bg-white pt-[4px] text-[12px] font-bold tracking-[-0.4px] text-[#217346] shadow-[inset_1px_0_0_#c6c6c6,inset_-1px_0_0_#c6c6c6]">Sheet1</div>
      <div className="mt-[3px] flex h-[19px] w-[61px] items-center justify-center border-r border-[#ababab]">Orders</div>
      <div className="flex h-[25px] w-[78px] items-center justify-center">
        <svg width="16" height="16" viewBox="0 0 16 16"><circle cx="8" cy="8" r="7" fill="none" stroke="#777" /><path d="M4 8h8M8 4v8" stroke="#777" strokeWidth="1.500" /></svg>
      </div>
      <div className="flex-1" />
      <div className="mt-[7px] flex h-[13px] w-[2px] flex-col justify-between"><i className="h-[2px] bg-[#aaa]" /><i className="h-[2px] bg-[#aaa]" /><i className="h-[2px] bg-[#aaa]" /><i className="h-[2px] bg-[#aaa]" /></div>
      <div className="mt-[6px] mr-[20px] ml-[14px] flex h-[14px] w-[604px] bg-[#ebebeb]">
        <div className="flex w-[15px] items-center justify-center border border-[#ababab] bg-white"><Arrow left color="#555" /></div>
        <div className="-ml-px w-[548px] border border-[#ababab] bg-white" />
        <div className="flex-1" />
        <div className="flex w-[14px] items-center justify-center border border-[#ababab] bg-white"><Arrow color="#555" /></div>
      </div>
    </footer>
  );
}

export default function App() {
  return (
    <div className="relative flex h-[919px] w-[1600px] flex-col overflow-hidden bg-white font-['Open_Sans',sans-serif]">
      <TabStrip />
      <Ribbon />
      <FormulaBar />
      <main className="flex h-[677px] shrink-0 overflow-hidden">
        <Sheet />
        <Scrollbars />
      </main>
      <SheetTabs />
      <div className="h-px shrink-0 bg-[#217346]" />

      <PieChart />
      <SubCategoryChart />
      <RegionChart />
      <Slicer className="top-[272px] left-[718px] h-[180px] w-[183px]" />
      <Slicer className="top-[563px] left-[714px] h-[164px] w-[183px]" />
      <Slicer className="top-[257px] left-[1314px] h-[179px] w-[183px]" />
      <div className="absolute top-[376px] left-[1317px] flex h-[17px] w-[17px] items-center justify-center border border-[#9c9488] bg-white">
        <svg width="13" height="13" viewBox="0 0 13 13">
          <path d="M0 0h3v3H0zM4 0h9v3H4zM0 4h3v9H0z" fill="#a8a8a8" />
          <path d="M6 11.500q4.500 0 4.500-6M8.700 7l1.800-2 1.800 2M7.500 9.500l-2 2 2 1.500" stroke="#3f78b5" fill="none" strokeWidth="1.200" />
        </svg>
      </div>
      <div className="absolute top-[793px] left-[978px] h-[22px] w-[72px] border-2 border-[#217346]">
        <span className="absolute -right-[3px] -bottom-[3px] h-[6px] w-[6px] border-t border-l border-white bg-[#217346]" />
      </div>

      <svg width="1600" height="919" viewBox="0 0 1600 919" className="pointer-events-none absolute top-0 left-0 font-['Noto_Sans'] font-light opacity-45" fill="#767b84" stroke="#767b84">
        <text x="666" y="546" fontSize="39" textLength="268" strokeWidth="0.500">POSTED ON JIJI</text>
        <text x="525" y="631.500" fontSize="62" textLength="550" strokeWidth="1">ADEDAYO SAMUEL</text>
      </svg>
    </div>
  );
}
